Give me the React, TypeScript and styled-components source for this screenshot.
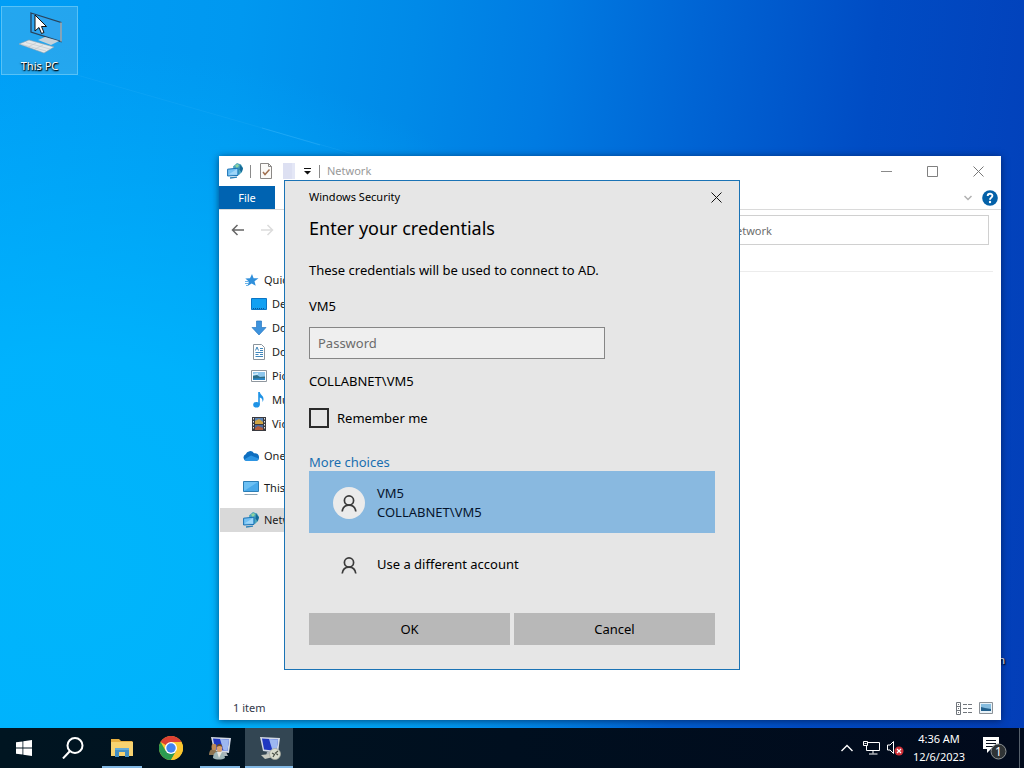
import React from "react";
import styled, { createGlobalStyle } from "styled-components";

const Global = createGlobalStyle`
  *, *::before, *::after { box-sizing: border-box; }
  html, body, #root { height: 100%; }
  body {
    margin: 0;
    overflow: hidden;
    font-family: "Noto Sans", "Open Sans", sans-serif;
    font-size: 11px;
    line-height: 16px;
    color: #1a1a1a;
  }
  button, input { font: inherit; color: inherit; margin: 0; }
  button { border: 0; padding: 0; background: none; }
  p, h1, h2, ul { margin: 0; padding: 0; list-style: none; font-weight: 400; }
  svg { display: block; flex: none; }
`;

/* ---------- desktop ---------- */

const Screen = styled.div`
  display: flex;
  flex-direction: column;
  height: 100vh;
`;

const Desktop = styled.main`
  position: relative;
  flex: 1;
  min-height: 0;
  overflow: hidden;
  background:
    radial-gradient(ellipse 60% 72% at 8% 78%, rgba(0, 184, 252, 0.9) 0%, rgba(0, 184, 255, 0.8) 40%, rgba(0, 184, 255, 0) 100%),
    linear-gradient(96deg, #009ef6 0%, #0098f0 22%, #008ae8 38%, #007be2 50%, #0064d4 64%, #004cc4 80%, #033eb8 100%);
`;

const Beam = styled.svg`
  position: absolute;
  left: 0;
  top: 70px;
`;

const DesktopIcon = styled.button`
  position: absolute;
  left: 1px;
  top: 6px;
  width: 77px;
  height: 69px;
  display: flex;
  flex-direction: column;
  align-items: center;
  gap: 3px;
  padding-top: 4px;
  border: 1px solid rgba(110, 205, 250, 0.7);
  background: rgba(90, 180, 230, 0.4);
`;

const IconLabel = styled.span`
  color: #fff;
  line-height: 16px;
  text-shadow: 0 1px 2px #000, 1px 1px 1px #000;
`;

const BinLabel = styled(IconLabel)`
  position: absolute;
  right: 19px;
  bottom: 60px;
`;

const Pointer = styled.svg`
  position: absolute;
  left: 34px;
  top: 14px;
`;

/* ---------- file explorer window ---------- */

const ExplorerWindow = styled.section`
  position: absolute;
  left: 219px;
  right: 23px;
  top: 156px;
  bottom: 8px;
  display: flex;
  flex-direction: column;
  background: #fff;
  box-shadow: 0 1px 7px rgba(0, 20, 60, 0.65);
`;

const TitleBar = styled.header`
  display: flex;
  align-items: center;
  height: 30px;
  padding-left: 8px;
`;

const Separator = styled.span`
  width: 1px;
  height: 13px;
  background: #8a8a8a;
`;

const QuickTools = styled.div`
  flex: 1;
  display: flex;
  align-items: center;
  gap: 7px;
`;

const QuickButton = styled.button<{ $narrow?: boolean }>`
  display: flex;
  justify-content: center;
  width: ${(p) => (p.$narrow ? 8 : 16)}px;
`;

const WindowTitle = styled.h1`
  font-size: 11px;
  color: #999;
`;

const WindowButton = styled.button`
  display: flex;
  align-items: center;
  justify-content: center;
  width: 46px;
  height: 28px;
`;

const Ribbon = styled.div`
  display: flex;
  align-items: center;
  height: 24px;
  padding-right: 3px;
  border-bottom: 1px solid #dadada;
`;

const FileTab = styled.button`
  align-self: stretch;
  width: 56px;
  background: #0063b1;
  color: #fff;
`;

const RibbonTools = styled.div`
  display: flex;
  align-items: center;
  gap: 10px;
  margin-left: auto;
`;

const NavRow = styled.div`
  display: flex;
  align-items: center;
  height: 40px;
  padding: 0 12px;
`;

const NavButton = styled.button`
  display: flex;
  margin-right: 15px;
`;

const SearchBox = styled.input`
  width: 320px;
  height: 30px;
  margin-left: auto;
  padding: 0 20px;
  border: 1px solid #d0d0d0;
  background: #fff;
  outline: 0;
  &::placeholder { color: #6d6d6d; opacity: 1; }
`;

const ExplorerBody = styled.div`
  flex: 1;
  display: flex;
  min-height: 0;
`;

const Sidebar = styled.nav`
  width: 180px;
  padding: 18px 0 0 1px;
  white-space: nowrap;
`;

const TreeGroup = styled.ul`
  margin-bottom: 8px;
`;

const TreeItem = styled.li<{ $child?: boolean; $selected?: boolean }>`
  display: flex;
  align-items: center;
  gap: 5px;
  height: 24px;
  padding-left: ${(p) => (p.$child ? 31 : 23)}px;
  background: ${(p) => (p.$selected ? "#d9d9d9" : "transparent")};
`;

const FilePane = styled.div`
  flex: 1;
  margin-right: 8px;
  height: 22px;
  border-bottom: 1px solid #ececec;
`;

const StatusBar = styled.footer`
  display: flex;
  align-items: center;
  height: 24px;
  padding: 0 8px 0 14px;
  color: #33384a;
`;

const ViewButtons = styled.div`
  display: flex;
  gap: 7px;
  margin-left: auto;
`;

/* ---------- credential dialog ---------- */

const Dialog = styled.form`
  position: absolute;
  left: 284px;
  top: 180px;
  width: 456px;
  display: flex;
  flex-direction: column;
  padding: 0 24px 24px;
  border: 1px solid #1a73b5;
  background: #e6e6e6;
  color: #000;
  font-size: 13px;
  line-height: 22px;
`;

const DialogBar = styled.header`
  display: flex;
  align-items: center;
  justify-content: space-between;
  height: 32px;
  margin-right: -10px;
  font-size: 11px;
`;

const CloseButton = styled.button`
  padding: 3px;
`;

const Heading = styled.h2`
  font-size: 18px;
  line-height: 30px;
`;

const Message = styled.p`
  margin: 16px 0 14px;
`;

const FieldLabel = styled.label``;

const PasswordInput = styled.input`
  width: 296px;
  height: 32px;
  margin: 10px 0 11px;
  padding: 0 8px;
  border: 1px solid #868686;
  background: #efefef;
  outline: 0;
  &::placeholder { color: #6b6b6b; opacity: 1; }
`;

const AccountName = styled.p``;

const Remember = styled.label`
  display: flex;
  align-items: center;
  gap: 8px;
  height: 20px;
  margin: 16px 0 25px;
`;

const CheckBox = styled.input`
  appearance: none;
  width: 20px;
  height: 20px;
  border: 2px solid #2b2b2b;
  background: transparent;
`;

const MoreLink = styled.a`
  align-self: flex-start;
  color: #1a6fb0;
  line-height: 18px;
  text-decoration: none;
`;

const AccountRow = styled.button<{ $selected?: boolean }>`
  display: flex;
  align-items: center;
  gap: 12px;
  height: 62px;
  padding: 1px 24px 0;
  background: ${(p) => (p.$selected ? "#89b9e0" : "transparent")};
  color: ${(p) => (p.$selected ? "#06142c" : "#000")};
  line-height: 19px;
  text-align: left;
`;

const Avatar = styled.span<{ $filled?: boolean }>`
  display: flex;
  align-items: center;
  justify-content: center;
  width: 32px;
  height: 32px;
  border-radius: 50%;
  background: ${(p) => (p.$filled ? "#ebebeb" : "transparent")};
`;

const AccountLine = styled.span`
  display: block;
`;

const DialogActions = styled.div`
  display: flex;
  gap: 4px;
  margin-top: 18px;
`;

const ActionButton = styled.button`
  flex: 1;
  height: 32px;
  background: #b8b8b8;
`;

/* ---------- taskbar ---------- */

const Taskbar = styled.footer`
  display: flex;
  height: 40px;
  background: linear-gradient(90deg, #001521, #000f1f 50%, #010a1c);
  color: #fff;
`;

const TaskList = styled.div`
  display: flex;
  gap: 1px;
`;

const TaskButton = styled.button<{ $running?: boolean; $active?: boolean }>`
  position: relative;
  display: flex;
  align-items: center;
  justify-content: center;
  width: 48px;
  background: ${(p) => (p.$active ? "#334653" : "transparent")};
  &::after {
    content: "";
    position: absolute;
    bottom: 0;
    left: ${(p) => (p.$active ? 0 : 4)}px;
    right: ${(p) => (p.$active ? 0 : 4)}px;
    height: 2px;
    background: ${(p) => (p.$active || p.$running ? "#82b8e4" : "transparent")};
  }
`;

const Tray = styled.div`
  display: flex;
  align-items: center;
  margin-left: auto;
`;

const TrayButton = styled.button`
  display: flex;
  align-items: center;
  justify-content: center;
  width: 24px;
  height: 40px;
`;

const Clock = styled.button`
  width: 64px;
  line-height: 18px;
  text-align: center;
  color: #fff;
`;

const Notifications = styled.button`
  display: flex;
  justify-content: center;
  width: 48px;
`;

const ShowDesktop = styled.button`
  align-self: stretch;
  width: 5px;
  border-left: 1px solid #56606c;
`;

/* ---------- icons ---------- */

const NetworkIcon = () => (
  <svg width="16" height="16" viewBox="0 0 16 16">
    <path d="M6 3.500L10 0l4 1.500L16 5l-1 4-3 3-5-2z" fill="#4aa5bd" />
    <path d="M8 2.500L10.500 1l1.500 1.500-2 3z" fill="#8fd3a0" />
    <path d="M13 1.500l3 4-1.500 4-2-3z" fill="#176a98" />
    <path d="M.6 6.200l10.400-1v7.200L.6 13z" fill="#74c1f3" stroke="#1b72b4" />
    <path d="M1.500 11.500L10 6v5.800z" fill="#9fd6f8" />
    <path d="M3 15l7-.8" stroke="#2f83b8" strokeWidth="1.300" />
  </svg>
);

const PropertiesIcon = () => (
  <svg width="12" height="16" viewBox="0 0 12 16" fill="none">
    <path d="M.5.5h8l3 3v12H.5z" fill="#fbfaf8" stroke="#8b8886" />
    <path d="M8.500.5v3h3" stroke="#8b8886" />
    <path d="M3 9l2 2.500L9.500 6.500" stroke="#a07050" strokeWidth="1.500" />
  </svg>
);

const NewFolderIcon = () => (
  <svg width="12" height="16" viewBox="0 0 12 16">
    <path d="M0 0h12v16H0z" fill="#dde0f2" />
    <path d="M9 0h3v16H9z" fill="#e4e7f6" />
  </svg>
);

const CustomizeIcon = () => (
  <svg width="8" height="8" viewBox="0 0 8 8">
    <path d="M0 1h7v1H0zM0 4h7L3.500 7.500z" fill="#111" />
  </svg>
);

const MinimizeIcon = () => (
  <svg width="11" height="11" viewBox="0 0 11 11">
    <path d="M0 5.500h11" stroke="#8a8a8a" />
  </svg>
);

const MaximizeIcon = () => (
  <svg width="11" height="11" viewBox="0 0 11 11">
    <path d="M.5.5h10v10H.5z" fill="none" stroke="#808080" />
  </svg>
);

const CloseIcon = ({ color }: { color: string }) => (
  <svg width="11" height="11" viewBox="0 0 11 11">
    <path d="M.5.5l10 10M10.500.5l-10 10" stroke={color} />
  </svg>
);

const ArrowIcon = ({ color, flip }: { color: string; flip?: boolean }) => (
  <svg width="14" height="12" viewBox="0 0 14 12" fill="none" stroke={color} strokeWidth="1.500">
    <path d={flip ? "M1 6h11M7.500 1l5 5-5 5" : "M13 6H2M6.500 1l-5 5 5 5"} />
  </svg>
);

const HelpIcon = () => (
  <svg width="16" height="16" viewBox="0 0 16 16">
    <circle cx="8" cy="8" r="7.800" fill="#0461a8" />
    <path d="M5.700 6c0-3 4.700-3 4.700-.2C10.400 7.600 8 7.700 8 9.700" fill="none" stroke="#fff" strokeWidth="1.900" />
    <circle cx="8" cy="12" r="1.200" fill="#fff" />
  </svg>
);

const StarIcon = () => (
  <svg width="16" height="16" viewBox="0 0 16 16">
    <path d="M9 2l1.600 4.200 4.900.1-4 2.900 1.200 4.600-4-2.400-4.200 2.700 1.400-4.600L2.300 6.600l4.700-.3z" fill="#2f8fdb" />
    <path d="M2 9.500h4M2 11.500h4M3 13.500h2" stroke="#69b3e8" />
  </svg>
);

const DesktopFolderIcon = () => (
  <svg width="16" height="16" viewBox="0 0 16 16">
    <path d="M.5 2.500h15v11H.5z" fill="#12a0f2" stroke="#0b74c4" />
    <path d="M2 12.500h12" stroke="#0a5593" strokeDasharray="1 1" />
  </svg>
);

const DownloadIcon = () => (
  <svg width="16" height="16" viewBox="0 0 16 16">
    <path d="M5.500 1h5v6.500H15L8 15 1 7.500h4.500z" fill="#3d93dd" stroke="#2a78c2" strokeWidth=".7" />
  </svg>
);

const DocumentIcon = () => (
  <svg width="16" height="16" viewBox="0 0 16 16" fill="none">
    <path d="M2.500.5h8l3 3v12h-11z" fill="#fff" stroke="#8a949c" />
    <path d="M4.500 6.500L6 3l1.500 3.500M9 4.500h3M9 6.500h3M4.500 8.500h7.500M4.500 10.500h3M9 10.500h3M4.500 12.500h7.500" stroke="#3f86bb" />
  </svg>
);

const PictureIcon = () => (
  <svg width="16" height="16" viewBox="0 0 16 16">
    <path d="M.5 2.500h15v11H.5z" fill="#fff" stroke="#8f979e" />
    <path d="M2 4h12v8H2z" fill="#8ec7ed" />
    <path d="M2 8l4-1 3 2 5-.5V12H2z" fill="#2d6d86" />
    <path d="M2 10.500l12-.5v2H2z" fill="#2a86c8" />
    <path d="M2 6l5-1v1.500L2 7z" fill="#d9eefb" />
  </svg>
);

const MusicIcon = () => (
  <svg width="16" height="16" viewBox="0 0 16 16">
    <ellipse cx="5.500" cy="12.800" rx="3.300" ry="2.800" fill="#1f93e6" />
    <path d="M7.200 0h1.600c.5 3 4 3.500 3.700 7.500-.2 1.300-.6 2-1 2.500.3-3-1-4-2.700-4.500v7.300H7.200z" fill="#1f93e6" />
  </svg>
);

const VideoIcon = () => (
  <svg width="16" height="16" viewBox="0 0 16 16">
    <path d="M1 1h14v14H1z" fill="#3a3a3f" />
    <path d="M4 2h8v6H4z" fill="#5d86b8" />
    <path d="M4 5l4-2 4 3v2H4z" fill="#d0a544" />
    <path d="M4 9h8v5H4z" fill="#4b6aa0" />
    <path d="M4 12l3-2 5 2v2H4z" fill="#b35d3c" />
    <path d="M2.500 2v12M13.500 2v12" stroke="#e6e6e6" strokeDasharray="1.500 1.500" />
  </svg>
);

const CloudIcon = () => (
  <svg width="16" height="16" viewBox="0 0 16 16">
    <path d="M3.500 13a3.500 3.500 0 01-.8-6.700A4.600 4.600 0 0111 5.300a4 4 0 015 4.200A3.200 3.200 0 0113 13z" fill="#0f6fc0" />
    <path d="M1 11.500L8 7.500 15.800 10.500A3 3 0 0113 13H3.500A3 3 0 011 11.500z" fill="#2d95e3" />
  </svg>
);

const ComputerIcon = () => (
  <svg width="16" height="16" viewBox="0 0 16 16">
    <path d="M.5 1.500h15v10H.5z" fill="#6cc0f4" stroke="#2b7db5" />
    <path d="M1 11L15 2v9z" fill="#48a9ea" />
    <path d="M1.500 14.500h13" stroke="#8ba2b2" />
  </svg>
);

const DetailsIcon = () => (
  <svg width="16" height="13" viewBox="0 0 16 13" fill="none" stroke="#71767c">
    <path d="M.5.5h4v12h-4zM.5 4.500h4M.5 8.500h4" />
    <path d="M7 2.500h4M12 2.500h4M7 6.500h4M12 6.500h4M7 10.500h4M12 10.500h4M2 2.500h1M2 6.500h1M2 10.500h1" />
  </svg>
);

const LargeIconsIcon = () => (
  <svg width="14" height="12" viewBox="0 0 14 12">
    <path d="M.5.5h13v11H.5z" fill="#e8f2f8" stroke="#8b9197" />
    <path d="M2 2h10v7H2z" fill="#87bddf" />
    <path d="M2 5l4 1 6 1v2H2z" fill="#23608c" />
  </svg>
);

const PersonIcon = () => (
  <svg width="16" height="18" viewBox="0 0 16 18" fill="none" stroke="#3a3a3a" strokeWidth="1.700">
    <circle cx="8" cy="6.500" r="4.600" />
    <path d="M1.200 17.500c.5-3.800 2.800-6.400 6.800-6.400s6.300 2.600 6.800 6.400" />
  </svg>
);

const ThisPcIcon = () => (
  <svg width="44" height="44" viewBox="0 0 44 44">
    <path d="M13 2l30 9.500v19L13 21z" fill="#2fa4ee" stroke="#29435c" strokeWidth="1.300" />
    <path d="M43 11.500v19" stroke="#b9c6cf" strokeWidth="1.300" />
    <path d="M20 29l7-3 14 4-8 4z" fill="#c6d2da" />
    <path d="M1 33l10-4 25 7-10 6z" fill="#e4e8ea" stroke="#8fa3b0" strokeWidth=".6" />
    <path d="M4 33.500l24 6.500M8 31.500l24 6.500M10 36l8-4M17 38l8-4" stroke="#bcc5ca" strokeWidth=".6" />
  </svg>
);

const StartIcon = () => (
  <svg width="16" height="16" viewBox="0 0 16 16" fill="#fff">
    <path d="M0 2.300l6.500-.9v6.200H0zM7.300 1.300L16 0v7.600H7.300zM0 8.400h6.500v6.200L0 13.700zM7.300 8.400H16V16l-8.700-1.300z" />
  </svg>
);

const SearchIcon = () => (
  <svg width="22" height="22" viewBox="0 0 22 22" fill="none" stroke="#fff" strokeWidth="2">
    <circle cx="13" cy="8.500" r="7.500" />
    <path d="M8 14l-7 7.500" />
  </svg>
);

const FolderIcon = () => (
  <svg width="22" height="20" viewBox="0 0 22 20">
    <path d="M0 1h8l2 2h11.500v15H0z" fill="#e9b040" />
    <path d="M0 4h22v14H0z" fill="#f8d370" />
    <path d="M4 10h14v9h-4v-5H8v5H4z" fill="#438fc4" />
    <path d="M4 10h14v2H4z" fill="#64abd8" />
  </svg>
);

const ChromeIcon = () => (
  <svg width="24" height="24" viewBox="0 0 24 24">
    <circle cx="12" cy="12" r="12" fill="#fbc62f" />
    <path d="M12 12L1.600 6A12 12 0 0122.400 6z" fill="#dc4033" />
    <path d="M1.600 6A12 12 0 0012 24l5.200-9L12 12 6.800 15z" fill="#2c9b50" />
    <path d="M12 6h10.400A12 12 0 0112 24l5.200-9z" fill="#fbc62f" />
    <circle cx="12" cy="12" r="6" fill="#fff" />
    <circle cx="12" cy="12" r="4.700" fill="#4284f0" />
  </svg>
);

const ScreenGlyph = () => (
  <>
    <path d="M3 1l20 1-2 15-15-2z" fill="#d3dae6" />
    <path d="M5 2.500l16 1-1.500 11.500L7 13.500z" fill="#2038c0" />
    <path d="M12 3l9 .5-1.500 11.500-4-.4z" fill="#9db7f0" />
    <path d="M10 16h8l2 4H9z" fill="#aeb6ba" />
  </>
);

const UsersComputerIcon = () => (
  <svg width="24" height="24" viewBox="0 0 24 24">
    <ScreenGlyph />
    <path d="M1 19c0-8 8-8 9 0z" fill="#8c7350" />
    <path d="M5 22c0-9 11-9 12 0-3 2-9 2-12 0z" fill="#9fb6b8" />
    <path d="M9 16l2 6 3-6z" fill="#e7e7e0" />
    <ellipse cx="6" cy="11" rx="2.500" ry="3.200" fill="#c08a55" />
    <ellipse cx="11.500" cy="12.500" rx="2.800" ry="3.600" fill="#d8a070" />
    <path d="M8.700 11c0-4 5.600-4 5.600 0-2-1.500-3.600-1.500-5.600 0z" fill="#6b4a25" />
  </svg>
);

const RemoteDesktopIcon = () => (
  <svg width="24" height="24" viewBox="0 0 24 24">
    <ScreenGlyph />
    <path d="M4 19l9-1 3 3-8 2z" fill="#c6c9c0" />
    <circle cx="18" cy="18" r="5.500" fill="#d9dccf" stroke="#a3a69b" strokeWidth=".7" />
    <path d="M15 17l2.500 1.500L16 21M21 15l-2.500 2 2.500 2" fill="none" stroke="#4b5147" strokeWidth="1.200" />
  </svg>
);

const ChevronIcon = ({ up }: { up?: boolean }) =>
  up ? (
    <svg width="12" height="8" viewBox="0 0 12 8" fill="none">
      <path d="M.5 7L6 1.500 11.500 7" stroke="#fff" strokeWidth="1.400" />
    </svg>
  ) : (
    <svg width="8" height="6" viewBox="0 0 8 6" fill="none">
      <path d="M.5 1L4 4.500 7.500 1" stroke="#b0b0b0" strokeWidth="1.500" />
    </svg>
  );

const EthernetIcon = () => (
  <svg width="17" height="14" viewBox="0 0 17 14" fill="none" stroke="#fff">
    <path d="M5 1.500h11.500v8H3.500V5M10 9.500v3M6 13h8.500" />
    <path d="M.5.5h4v4h-4zM1.500 2.500h2" />
  </svg>
);

const MutedIcon = () => (
  <svg width="17" height="16" viewBox="0 0 17 16">
    <path d="M.5 5h2.500L6.500 1.500v12L3 10H.5z" fill="none" stroke="#fff" />
    <circle cx="12" cy="11" r="4.500" fill="#cf3038" />
    <path d="M10 9l4 4M14 9l-4 4" stroke="#fff" strokeWidth="1.200" />
  </svg>
);

const NotificationIcon = () => (
  <svg width="24" height="24" viewBox="0 0 24 24">
    <path d="M0 1h16v12H8l-4 4v-4H0z" fill="#fff" />
    <path d="M3 4.500h10M3 7.500h10M3 10.500h7" stroke="#0a1220" />
    <circle cx="15.500" cy="15.500" r="7.500" fill="#2f3335" stroke="#8d9294" />
    <text x="15.500" y="20" fill="#fff" fontSize="12" textAnchor="middle">1</text>
  </svg>
);

/* ---------- page ---------- */

const quickAccess = [
  { name: "Desktop", icon: <DesktopFolderIcon /> },
  { name: "Downloads", icon: <DownloadIcon /> },
  { name: "Documents", icon: <DocumentIcon /> },
  { name: "Pictures", icon: <PictureIcon /> },
  { name: "Music", icon: <MusicIcon /> },
  { name: "Videos", icon: <VideoIcon /> },
];

const roots = [
  { name: "OneDrive", icon: <CloudIcon /> },
  { name: "This PC", icon: <ComputerIcon /> },
  { name: "Network", icon: <NetworkIcon />, selected: true },
];

const Explorer = () => (
  <ExplorerWindow aria-label="Network">
    <TitleBar>
      <QuickTools>
        <NetworkIcon />
        <Separator />
        <QuickButton type="button" aria-label="Properties"><PropertiesIcon /></QuickButton>
        <QuickButton type="button" aria-label="New folder"><NewFolderIcon /></QuickButton>
        <QuickButton type="button" aria-label="Customize toolbar" $narrow><CustomizeIcon /></QuickButton>
        <Separator />
        <WindowTitle>Network</WindowTitle>
      </QuickTools>
      <WindowButton type="button" aria-label="Minimize"><MinimizeIcon /></WindowButton>
      <WindowButton type="button" aria-label="Maximize"><MaximizeIcon /></WindowButton>
      <WindowButton type="button" aria-label="Close"><CloseIcon color="#777" /></WindowButton>
    </TitleBar>
    <Ribbon>
      <FileTab type="button">File</FileTab>
      <RibbonTools>
        <ChevronIcon />
        <HelpIcon />
      </RibbonTools>
    </Ribbon>
    <NavRow>
      <NavButton type="button" aria-label="Back"><ArrowIcon color="#666" /></NavButton>
      <NavButton type="button" aria-label="Forward"><ArrowIcon color="#dcdcdc" flip /></NavButton>
      <SearchBox type="search" aria-label="Search Network" placeholder="Search Network" />
    </NavRow>
    <ExplorerBody>
      <Sidebar>
        <TreeGroup>
          <TreeItem><StarIcon />Quick access</TreeItem>
          {quickAccess.map((item) => (
            <TreeItem key={item.name} $child>{item.icon}{item.name}</TreeItem>
          ))}
        </TreeGroup>
        {roots.map((item) => (
          <TreeGroup key={item.name}>
            <TreeItem $selected={item.selected}>{item.icon}{item.name}</TreeItem>
          </TreeGroup>
        ))}
      </Sidebar>
      <FilePane />
    </ExplorerBody>
    <StatusBar>
      1 item
      <ViewButtons>
        <DetailsIcon />
        <LargeIconsIcon />
      </ViewButtons>
    </StatusBar>
  </ExplorerWindow>
);

const Credentials = () => (
  <Dialog role="dialog" aria-label="Windows Security" onSubmit={(e) => e.preventDefault()}>
    <DialogBar>
      Windows Security
      <CloseButton type="button" aria-label="Close"><CloseIcon color="#111" /></CloseButton>
    </DialogBar>
    <Heading>Enter your credentials</Heading>
    <Message>These credentials will be used to connect to AD.</Message>
    <FieldLabel htmlFor="password">VM5</FieldLabel>
    <PasswordInput id="password" type="password" placeholder="Password" />
    <AccountName>COLLABNET\VM5</AccountName>
    <Remember>
      <CheckBox type="checkbox" />
      Remember me
    </Remember>
    <MoreLink href="#choices">More choices</MoreLink>
    <AccountRow type="button" $selected>
      <Avatar $filled><PersonIcon /></Avatar>
      <span>
        <AccountLine>VM5</AccountLine>
        <AccountLine>COLLABNET\VM5</AccountLine>
      </span>
    </AccountRow>
    <AccountRow type="button">
      <Avatar><PersonIcon /></Avatar>
      Use a different account
    </AccountRow>
    <DialogActions>
      <ActionButton type="submit">OK</ActionButton>
      <ActionButton type="button">Cancel</ActionButton>
    </DialogActions>
  </Dialog>
);

export default function App() {
  return (
    <Screen>
      <Global />
      <Desktop>
        <Beam width="360" height="90" viewBox="0 0 360 90">
          <path d="M70 3L360 86" stroke="#55c4ff" strokeOpacity=".12" />
          <path d="M262 58L320 75" stroke="#55c4ff" strokeOpacity=".25" />
        </Beam>
        <DesktopIcon type="button">
          <ThisPcIcon />
          <IconLabel>This PC</IconLabel>
        </DesktopIcon>
        <BinLabel>Recycle Bin</BinLabel>
        <Explorer />
        <Credentials />
        <Pointer width="14" height="21" viewBox="0 0 14 21">
          <path d="M1 1v16l4-3.500 2.500 6 2.500-1-2.500-6h5z" fill="#fff" stroke="#111" />
        </Pointer>
      </Desktop>
      <Taskbar>
        <TaskList>
          <TaskButton type="button" aria-label="Start"><StartIcon /></TaskButton>
          <TaskButton type="button" aria-label="Search"><SearchIcon /></TaskButton>
          <TaskButton type="button" aria-label="File Explorer" $running><FolderIcon /></TaskButton>
          <TaskButton type="button" aria-label="Chrome"><ChromeIcon /></TaskButton>
          <TaskButton type="button" aria-label="Users and Computers" $running><UsersComputerIcon /></TaskButton>
          <TaskButton type="button" aria-label="Remote Desktop" $active><RemoteDesktopIcon /></TaskButton>
        </TaskList>
        <Tray>
          <TrayButton type="button" aria-label="Show hidden icons"><ChevronIcon up /></TrayButton>
          <TrayButton type="button" aria-label="Network"><EthernetIcon /></TrayButton>
          <TrayButton type="button" aria-label="Volume"><MutedIcon /></TrayButton>
          <Clock type="button">4:36 AM<br />12/6/2023</Clock>
          <Notifications type="button" aria-label="Notifications"><NotificationIcon /></Notifications>
          <ShowDesktop type="button" aria-label="Show desktop" />
        </Tray>
      </Taskbar>
    </Screen>
  );
}
